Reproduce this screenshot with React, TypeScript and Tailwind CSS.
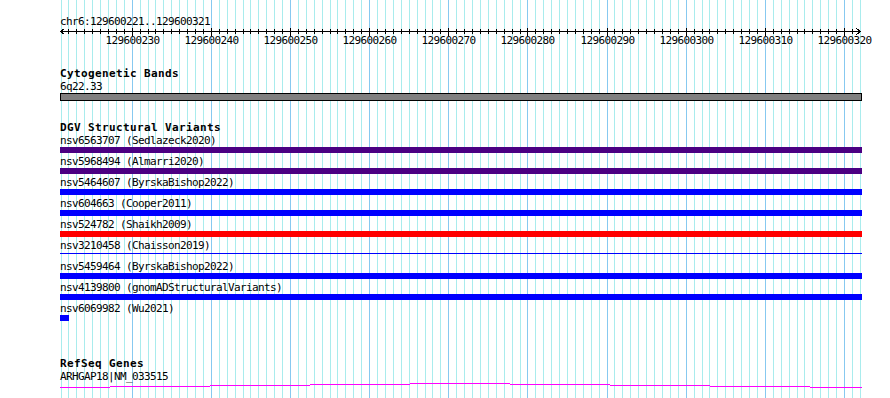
import React from "react";

const X0 = 60.5;
const STEP = 7.914;
const gx = (k: number) => Math.round(X0 + k * STEP);

function Grid() {
  const lines: React.ReactNode[] = [];
  for (let k = 0; k <= 101; k++) {
    const x = gx(k) + 0.5;
    const major = k % 10 === 9;
    lines.push(
      <line
        key={k}
        x1={x}
        x2={x}
        y1={0}
        y2={398}
        stroke={major ? "#87c9f0" : "#a9eced"}
        strokeWidth={1}
      />
    );
  }
  return (
    <svg
      className="absolute left-0 top-0"
      width={890}
      height={398}
      shapeRendering="crispEdges"
    >
      {lines}
    </svg>
  );
}

function Ruler() {
  const ticks: React.ReactNode[] = [];
  const labels: React.ReactNode[] = [];
  for (let k = 1; k <= 100; k++) {
    const x = gx(k) - 60 + 0.5;
    const major = k % 10 === 9;
    ticks.push(
      <line
        key={k}
        x1={x}
        x2={x}
        y1={major ? 0 : 1}
        y2={major ? 8 : 6}
        stroke="#000"
      />
    );
    if (major) {
      labels.push(
        <text
          key={"l" + k}
          x={x}
          y={16}
          textAnchor="middle"
          fill="#000"
          className="font-['DejaVu_Sans_Mono',monospace] text-[11px] tracking-[-0.62px]"
        >
          {129600221 + k}
        </text>
      );
    }
  }
  return (
    <svg
      width={802}
      height={19}
      className="block overflow-visible"
      shapeRendering="crispEdges"
    >
      <line x1={0} x2={801} y1={3.5} y2={3.5} stroke="#000" />
      <polyline points="4.5,0.5 0.5,3.5 4.5,6.5" fill="none" stroke="#000" />
      <polyline points="796.5,0.5 800.5,3.5 796.5,6.5" fill="none" stroke="#000" />
      {ticks}
      {labels}
    </svg>
  );
}

const txt =
  "font-['DejaVu_Sans_Mono',monospace] text-[11px] tracking-[-0.62px] text-black h-[13px] leading-[14px] whitespace-nowrap";
const title =
  "font-['DejaVu_Sans_Mono',monospace] text-[11px] font-bold tracking-[0.38px] text-black h-[13px] leading-[14px] whitespace-nowrap";

type Variant = { name: string; kind: "purple" | "blue" | "red" | "thin" | "small" };

const variants: Variant[] = [
  { name: "nsv6563707 (Sedlazeck2020)", kind: "purple" },
  { name: "nsv5968494 (Almarri2020)", kind: "purple" },
  { name: "nsv5464607 (ByrskaBishop2022)", kind: "blue" },
  { name: "nsv604663 (Cooper2011)", kind: "blue" },
  { name: "nsv524782 (Shaikh2009)", kind: "red" },
  { name: "nsv3210458 (Chaisson2019)", kind: "thin" },
  { name: "nsv5459464 (ByrskaBishop2022)", kind: "blue" },
  { name: "nsv4139800 (gnomADStructuralVariants)", kind: "blue" },
  { name: "nsv6069982 (Wu2021)", kind: "small" },
];

function VariantBar({ kind }: { kind: Variant["kind"] }) {
  if (kind === "purple") return <div className="h-[6px] w-[802px] bg-[#4b0082]" />;
  if (kind === "blue") return <div className="h-[6px] w-[802px] bg-[#0000ff]" />;
  if (kind === "red") return <div className="h-[6px] w-[802px] bg-[#ff0000]" />;
  if (kind === "thin")
    return (
      <div className="h-[6px] w-[802px] pt-[1px]">
        <div className="h-px w-full bg-[#0000ff]" />
      </div>
    );
  return <div className="h-[6px] w-[9px] bg-[#0000ff]" />;
}

function GeneLine() {
  const segs: [number, number, number][] = [
    [60, 110, 387],
    [110, 210, 386],
    [210, 310, 385],
    [310, 410, 384],
    [410, 510, 383],
    [510, 610, 384],
    [610, 710, 385],
    [710, 810, 386],
    [810, 862, 387],
  ];
  return (
    <svg width={802} height={8} className="block" shapeRendering="crispEdges">
      {segs.map(([a, b, y], i) => (
        <rect key={i} x={a - 60} y={y - 383} width={b - a} height={1} fill="#ff00ff" />
      ))}
    </svg>
  );
}

export default function App() {
  return (
    <div className="relative w-[890px] h-[398px] bg-white overflow-hidden">
      <Grid />
      <div className="relative flex flex-col pl-[60px] pt-[15px]">
        <div className={txt}>chr6:129600221..129600321</div>
        <Ruler />
        <div className="h-[20px]" />
        <div className={title}>Cytogenetic Bands</div>
        <div className={txt}>6q22.33</div>
        <div className="h-[8px] w-[802px] bg-[#808080] border border-black" />
        <div className="h-[20px]" />
        <div className={title}>DGV Structural Variants</div>
        {variants.map((v) => (
          <div key={v.name} className="flex flex-col pb-[2px]">
            <div className={txt}>{v.name}</div>
            <VariantBar kind={v.kind} />
          </div>
        ))}
        <div className="h-[34px]" />
        <div className={title}>RefSeq Genes</div>
        <div className={txt}>ARHGAP18|NM_033515</div>
        <GeneLine />
      </div>
    </div>
  );
}
